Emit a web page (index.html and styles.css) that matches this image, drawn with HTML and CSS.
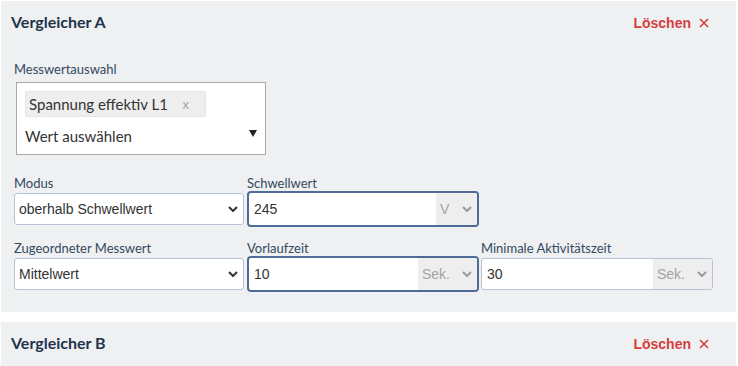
FILE: index.html
```html
<!DOCTYPE html>
<html lang="de">
<head>
    <meta charset="UTF-8">
    <meta name="viewport" content="width=device-width, initial-scale=1.0">
    <title>Vergleicher</title>
    <link rel="stylesheet" href="styles.css">
</head>
<body>
    <div class="comparator">
        <div class="comparator-header">
            <h2>Vergleicher A</h2>
            <button class="delete-btn">Löschen
                <svg class="delete-x" width="10" height="10" viewBox="0 0 10 10"><path d="M1 1L9 9M9 1L1 9"/></svg>
            </button>
        </div>
        <div class="field-multi">
            <label>Messwertauswahl</label>
            <div class="multiselect">
                <span class="tag">Spannung effektiv L1<span class="tag-remove">x</span></span>
                <div class="multiselect-placeholder">Wert auswählen</div>
                <svg class="multiselect-caret" width="8" height="7" viewBox="0 0 8 7"><polygon points="0,0 8,0 4,7"/></svg>
            </div>
        </div>
        <div class="field-grid">
            <div class="field">
                <label>Modus</label>
                <div class="select">
                    <span>oberhalb Schwellwert</span>
                    <svg class="chevron" width="10" height="6" viewBox="0 0 10 6"><path d="M1 1l4 4 4-4"/></svg>
                </div>
            </div>
            <div class="field">
                <label>Schwellwert</label>
                <div class="input-group active">
                    <span class="input-value">245</span>
                    <span class="unit unit-short">V
                        <svg class="chevron" width="10" height="6" viewBox="0 0 10 6"><path d="M1 1l4 4 4-4"/></svg>
                    </span>
                </div>
            </div>
            <div class="field"></div>

            <div class="field">
                <label>Zugeordneter Messwert</label>
                <div class="select">
                    <span>Mittelwert</span>
                    <svg class="chevron" width="10" height="6" viewBox="0 0 10 6"><path d="M1 1l4 4 4-4"/></svg>
                </div>
            </div>
            <div class="field">
                <label>Vorlaufzeit</label>
                <div class="input-group active">
                    <span class="input-value">10</span>
                    <span class="unit">Sek.
                        <svg class="chevron" width="10" height="6" viewBox="0 0 10 6"><path d="M1 1l4 4 4-4"/></svg>
                    </span>
                </div>
            </div>
            <div class="field">
                <label>Minimale Aktivitätszeit</label>
                <div class="input-group">
                    <span class="input-value">30</span>
                    <span class="unit">Sek.
                        <svg class="chevron" width="10" height="6" viewBox="0 0 10 6"><path d="M1 1l4 4 4-4"/></svg>
                    </span>
                </div>
            </div>
        </div>
    </div>

    <div class="comparator">
        <div class="comparator-header">
            <h2>Vergleicher B</h2>
            <button class="delete-btn">Löschen
                <svg class="delete-x" width="10" height="10" viewBox="0 0 10 10"><path d="M1 1L9 9M9 1L1 9"/></svg>
            </button>
        </div>
    </div>
</body>
</html>
```

FILE: styles.css
```css
body {
    margin: 0;
    padding: 1px 2px 0 1px;
    background-color: #ffffff;
    font-family: Lato, "Liberation Sans", sans-serif;
}
.comparator {
    background-color: #eff0f2;
    padding: 10px 27px 22px 13px;
    margin-bottom: 10px;
}
.comparator-header {
    display: flex;
    justify-content: space-between;
    align-items: center;
    height: 22px;
}
.comparator-header h2 {
    margin: 0 0 0 -3px;
    font-size: 16px;
    line-height: 22px;
    font-weight: 700;
    color: #22344b;
}
.delete-btn {
    display: flex;
    align-items: center;
    gap: 8px;
    padding: 0;
    margin-top: 2px;
    border: none;
    background: none;
    font-family: "Liberation Sans", Arial, sans-serif;
    font-size: 14px;
    font-weight: 700;
    color: #d63d3d;
    cursor: pointer;
}
.delete-x path {
    stroke: #d63d3d;
    stroke-width: 1.6;
    fill: none;
}
label {
    display: block;
    font-size: 13px;
    line-height: 16px;
    color: #34495e;
}
.field-multi {
    margin-top: 28px;
}
.multiselect {
    position: relative;
    box-sizing: border-box;
    width: 250px;
    height: 73px;
    margin: 5px 0 0 2px;
    padding: 8px 8px 0;
    border: 1px solid #a9a9a9;
    background-color: #ffffff;
}
.tag {
    display: flex;
    align-items: center;
    justify-content: space-between;
    box-sizing: border-box;
    width: 181px;
    height: 26px;
    padding: 0 16px 0 3px;
    border: 1px solid #e6e6e6;
    border-radius: 2px;
    background-color: #eeeeee;
    font-size: 15px;
    color: #333333;
}
.tag-remove {
    font-family: "Liberation Sans", Arial, sans-serif;
    font-size: 13px;
    color: #a0a0a0;
}
.multiselect-placeholder {
    margin-top: 9px;
    font-size: 15px;
    line-height: 20px;
    color: #333333;
}
.multiselect-caret {
    position: absolute;
    right: 8px;
    top: 47px;
    fill: #222222;
}
.field-grid {
    display: grid;
    grid-template-columns: 231px 232px 232px;
    column-gap: 2px;
    row-gap: 15px;
    margin-top: 20px;
}
.select,
.input-group {
    box-sizing: border-box;
    display: flex;
    align-items: center;
    height: 32px;
    margin-top: 2px;
    border: 1px solid #b7c3d3;
    border-radius: 3px;
    background-color: #ffffff;
    font-family: "Liberation Sans", Arial, sans-serif;
    font-size: 14px;
    color: #333333;
    overflow: hidden;
}
.select {
    width: 230px;
    justify-content: space-between;
    padding: 0 5px 0 4px;
}
.chevron path {
    stroke: #333333;
    stroke-width: 2;
    fill: none;
}
.input-group.active {
    height: 36px;
    margin: 0 0 -2px;
    border: 2px solid #4f6c98;
    border-radius: 4px;
}
.input-value {
    flex: 1;
    padding-left: 5px;
}
.unit {
    display: flex;
    align-items: center;
    justify-content: space-between;
    align-self: stretch;
    box-sizing: border-box;
    width: 59px;
    padding: 0 5px 0 4px;
    background-color: #eeeeee;
    color: #a3a3a3;
}
.unit-short {
    width: 41px;
}
.unit .chevron path {
    stroke: #9a9a9a;
}
```
